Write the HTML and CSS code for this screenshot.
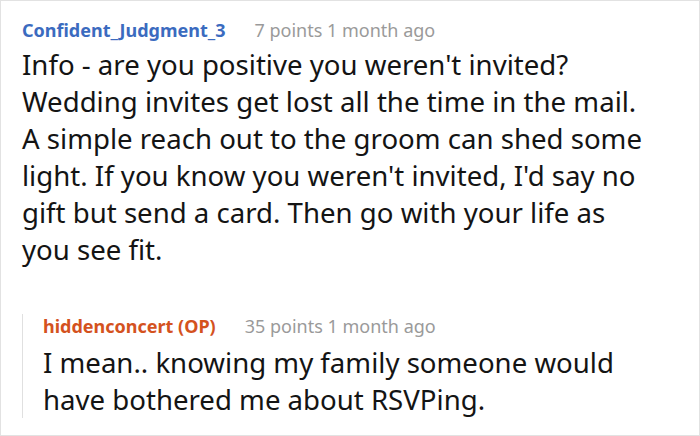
FILE: index.html
```html
<!DOCTYPE html>
<html>
<head>
<meta charset="utf-8">
<link rel="stylesheet" href="styles.css">
</head>
<body>
<div class="frame">
  <div class="comment">
    <div class="meta">
      <span class="author">Confident_Judgment_3</span>
      <span class="info">7 points 1 month ago</span>
    </div>
    <p class="text">Info - are you positive you weren't invited?<br>Wedding invites get lost all the time in the mail.<br>A simple reach out to the groom can shed some<br>light. If you know you weren't invited, I'd say no<br>gift but send a card. Then go with your life as<br>you see fit.</p>
    <div class="reply">
      <div class="meta">
        <span class="author op">hiddenconcert (OP)</span>
        <span class="info">35 points 1 month ago</span>
      </div>
      <p class="text">I mean.. knowing my family someone would<br>have bothered me about RSVPing.</p>
    </div>
  </div>
</div>
</body>
</html>
```
FILE: styles.css
```css
html, body {
  margin: 0;
  padding: 0;
  background: #fff;
}
.frame {
  box-sizing: border-box;
  width: 700px;
  height: 436px;
  border: 1px solid #e2e2e2;
  overflow: hidden;
  font-family: "Noto Sans", sans-serif;
  padding: 17px 20px 0 21px;
}
.meta {
  display: flex;
  gap: 29px;
  font-size: 18px;
  line-height: 24px;
  white-space: nowrap;
}
.author {
  color: #3b6bbf;
  font-weight: 700;
}
.author.op {
  color: #d4521e;
}
.info {
  color: #9a9a9a;
}
.text {
  margin: 4px 0 0;
  font-size: 27.6px;
  line-height: 37px;
  color: #141414;
  white-space: nowrap;
}
.reply {
  margin-top: 58px;
  border-left: 1px solid #e0e0e0;
  padding-left: 20px;
}
.reply .meta {
  margin-top: -12px;
}
.reply .text {
  margin-top: 6px;
}
```
